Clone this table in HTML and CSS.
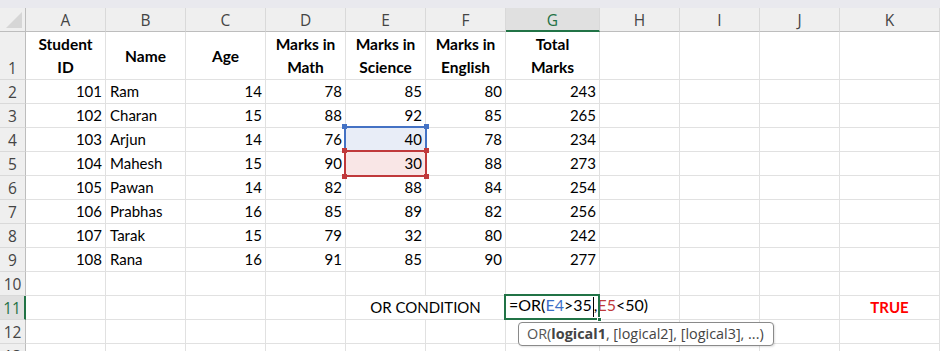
FILE: index.html
```html
<!DOCTYPE html>
<html>
<head>
<meta charset="utf-8">
<link rel="stylesheet" href="styles.css">
</head>
<body>
<div class="topstrip"></div>
<div class="sheet">
  <div class="corner"><span class="tri"></span></div>
  <div class="ch">A</div><div class="ch">B</div><div class="ch">C</div><div class="ch">D</div><div class="ch">E</div><div class="ch">F</div><div class="ch active-col">G</div><div class="ch">H</div><div class="ch">I</div><div class="ch">J</div><div class="ch">K</div>

  <div class="rh">1</div>
  <div class="c hd">Student ID</div><div class="c hd">Name</div><div class="c hd">Age</div><div class="c hd">Marks in Math</div><div class="c hd">Marks in Science</div><div class="c hd">Marks in English</div><div class="c hd wide">Total Marks</div><div class="c"></div><div class="c"></div><div class="c"></div><div class="c"></div>

  <div class="rh">2</div>
  <div class="c n">101</div><div class="c">Ram</div><div class="c n">14</div><div class="c n">78</div><div class="c n">85</div><div class="c n">80</div><div class="c n">243</div><div class="c"></div><div class="c"></div><div class="c"></div><div class="c"></div>

  <div class="rh">3</div>
  <div class="c n">102</div><div class="c">Charan</div><div class="c n">15</div><div class="c n">88</div><div class="c n">92</div><div class="c n">85</div><div class="c n">265</div><div class="c"></div><div class="c"></div><div class="c"></div><div class="c"></div>

  <div class="rh">4</div>
  <div class="c n">103</div><div class="c">Arjun</div><div class="c n">14</div><div class="c n">76</div><div class="c n ref-blue">40<span class="hdl hb tl"></span><span class="hdl hb tr"></span></div><div class="c n">78</div><div class="c n">234</div><div class="c"></div><div class="c"></div><div class="c"></div><div class="c"></div>

  <div class="rh">5</div>
  <div class="c n">104</div><div class="c">Mahesh</div><div class="c n">15</div><div class="c n">90</div><div class="c n ref-red">30<span class="hdl hr tl"></span><span class="hdl hr tr"></span><span class="hdl hr bl"></span><span class="hdl hr br"></span></div><div class="c n">88</div><div class="c n">273</div><div class="c"></div><div class="c"></div><div class="c"></div><div class="c"></div>

  <div class="rh">6</div>
  <div class="c n">105</div><div class="c">Pawan</div><div class="c n">14</div><div class="c n">82</div><div class="c n">88</div><div class="c n">84</div><div class="c n">254</div><div class="c"></div><div class="c"></div><div class="c"></div><div class="c"></div>

  <div class="rh">7</div>
  <div class="c n">106</div><div class="c">Prabhas</div><div class="c n">16</div><div class="c n">85</div><div class="c n">89</div><div class="c n">82</div><div class="c n">256</div><div class="c"></div><div class="c"></div><div class="c"></div><div class="c"></div>

  <div class="rh">8</div>
  <div class="c n">107</div><div class="c">Tarak</div><div class="c n">15</div><div class="c n">79</div><div class="c n">32</div><div class="c n">80</div><div class="c n">242</div><div class="c"></div><div class="c"></div><div class="c"></div><div class="c"></div>

  <div class="rh">9</div>
  <div class="c n">108</div><div class="c">Rana</div><div class="c n">16</div><div class="c n">91</div><div class="c n">85</div><div class="c n">90</div><div class="c n">277</div><div class="c"></div><div class="c"></div><div class="c"></div><div class="c"></div>

  <div class="rh">10</div>
  <div class="c"></div><div class="c"></div><div class="c"></div><div class="c"></div><div class="c"></div><div class="c"></div><div class="c"></div><div class="c"></div><div class="c"></div><div class="c"></div><div class="c"></div>

  <div class="rh active-row">11</div>
  <div class="c"></div><div class="c"></div><div class="c"></div><div class="c"></div><div class="c ctr span2">OR CONDITION</div><div class="c formula"><span class="ftext">=OR(<span class="rb">E4</span>&gt;35<span class="caret"></span>,<span class="rr">E5</span>&lt;50)</span><span class="fill-hdl"></span><span class="tip"><span class="tg">OR(</span><b>logical1</b>, [logical2], [logical3], ...)</span></div><div class="c"></div><div class="c"></div><div class="c"></div><div class="c ctr true">TRUE</div>

  <div class="rh">12</div>
  <div class="c"></div><div class="c"></div><div class="c"></div><div class="c"></div><div class="c"></div><div class="c"></div><div class="c"></div><div class="c"></div><div class="c"></div><div class="c"></div><div class="c"></div>

  <div class="rh last">13</div>
  <div class="c"></div><div class="c"></div><div class="c"></div><div class="c"></div><div class="c"></div><div class="c"></div><div class="c"></div><div class="c"></div><div class="c"></div><div class="c"></div><div class="c"></div>
</div>
</body>
</html>
```

FILE: styles.css
```css
* { box-sizing: border-box; }
html, body { margin: 0; padding: 0; background: #fff; overflow: hidden; }
body { width: 940px; height: 351px; }

.topstrip { height: 8px; background: #e9e9ee; }

.sheet {
  display: grid;
  grid-template-columns: 26px 80px 80px 80px 80px 80px 80px 94px 80px 80px 80px 100px;
  grid-template-rows: 24px 48px repeat(12, 24px);
  font-family: Lato, "Liberation Sans", sans-serif;
  font-size: 15px;
  color: #000;
}

.corner {
  background: #efefef;
  border-right: 1px solid #bdbdbd;
  border-bottom: 1px solid #bdbdbd;
  position: relative;
}
.corner .tri {
  position: absolute;
  right: 3px; bottom: 3px;
  width: 0; height: 0;
  border-left: 16px solid transparent;
  border-bottom: 16px solid #d6d6d6;
}

.ch {
  background: #efefef;
  border-right: 1px solid #d9d9d9;
  border-bottom: 1px solid #bdbdbd;
  display: flex; align-items: center; justify-content: center;
  font-family: "Open Sans", "Noto Sans", sans-serif;
  font-size: 15.5px;
  color: #444;
  padding-top: 1px;
}
.ch.active-col {
  background: #e0e0e0;
  color: #1e7145;
  border-bottom: 2px solid #217346;
  padding-top: 2px;
}

.rh {
  background: #efefef;
  border-right: 1px solid #bdbdbd;
  border-bottom: 1px solid #d9d9d9;
  display: flex; align-items: flex-end; justify-content: center;
  font-family: "Open Sans", "Noto Sans", sans-serif;
  font-size: 15.5px;
  color: #444;
  line-height: 20px;
  padding-bottom: 1px;
}
.rh.active-row {
  background: #e0e0e0;
  color: #1e7145;
  border-right: 2px solid #217346;
}
.rh.last { align-items: flex-start; padding-top: 2px; padding-bottom: 0; }

.c {
  border-right: 1px solid #e1e1e1;
  border-bottom: 1px solid #e1e1e1;
  display: flex; align-items: flex-end;
  padding: 0 4px 2px 4px;
  line-height: 20px;
  white-space: nowrap;
  position: relative;
}
.c.n { justify-content: flex-end; padding-right: 3px; }
.c.ctr { justify-content: center; }
.c.span2 { grid-column: span 2; }
.c.hd {
  font-weight: 700;
  font-size: 15.5px;
  text-align: center;
  justify-content: center;
  align-items: center;
  white-space: normal;
  line-height: 23px;
  padding: 1px 9px 0 9px;
}
.c.hd.wide { padding: 1px 14px 0 14px; }
.c.true { color: #ff0000; font-weight: 700; }

.ref-blue { background: #e8edf7; }
.ref-blue::after {
  content: "";
  position: absolute;
  left: -2px; top: -2px; right: -2px; bottom: -1px;
  border: 2px solid #4472c4;
  z-index: 2;
}
.ref-red { background: #f9e6e6; }
.ref-red::after {
  content: "";
  position: absolute;
  left: -2px; top: -2px; right: -2px; bottom: -2px;
  border: 2px solid #c0393b;
  z-index: 3;
}
.hdl {
  position: absolute;
  width: 5px; height: 5px;
  z-index: 4;
}
.hb { background: #4472c4; }
.hr { background: #c0393b; }
.hdl.tl { left: -4px; top: -4px; }
.hdl.tr { right: -4px; top: -4px; }
.hdl.bl { left: -4px; bottom: -4px; }
.hdl.br { right: -4px; bottom: -4px; }

.formula {
  border-right-color: transparent;
  overflow: visible;
  z-index: 5;
  padding-left: 3px;
}
.formula::after {
  content: "";
  position: absolute;
  left: -2px; top: -2px; right: -1px; bottom: -1px;
  border: 2px solid #217346;
}
.ftext { display: inline-block; white-space: nowrap; font-size: 16px; }
.fill-hdl {
  position: absolute;
  right: -3px; bottom: -3px;
  width: 5px; height: 5px;
  background: #217346;
  border: 1px solid #fff;
  z-index: 6;
}
.rb { color: #3c6fc6; }
.rr { color: #c0393b; }
.caret {
  display: inline-block;
  width: 1px; height: 20px;
  background: #000;
  vertical-align: -6px;
  margin: 0 0 0 1px;
}

.tip {
  position: absolute;
  left: 12px; top: 26px;
  height: 24px;
  padding: 0 9px 0 8px;
  background: #fff;
  border: 1px solid #8a8a8a;
  border-radius: 4px;
  box-shadow: 1px 1px 2px rgba(0,0,0,0.12);
  font-family: "Open Sans", "Noto Sans", sans-serif;
  font-size: 14.4px;
  line-height: 22px;
  color: #444;
  white-space: nowrap;
  z-index: 10;
}
.tip .tg { color: #555; }
.tip b { font-weight: 700; color: #444; }
```
